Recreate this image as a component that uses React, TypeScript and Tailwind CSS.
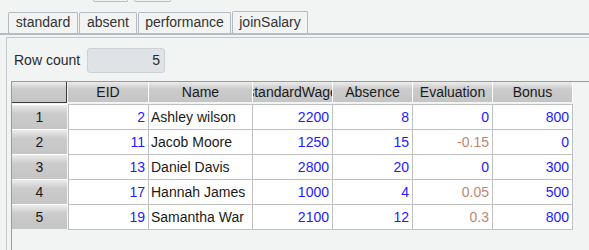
const tabs = [
  { label: "standard", w: "w-[70px]", active: false },
  { label: "absent", w: "w-[58px]", active: false },
  { label: "performance", w: "w-[93px]", active: false },
  { label: "joinSalary", w: "w-[76px]", active: true },
];

type Col = { label: string; w: string; align: "left" | "right"; first?: boolean };

const cols: Col[] = [
  { label: "EID", w: "w-[81px]", align: "right", first: true },
  { label: "Name", w: "w-[104px]", align: "left" },
  { label: "standardWage", w: "w-[80px]", align: "right" },
  { label: "Absence", w: "w-[80px]", align: "right" },
  { label: "Evaluation", w: "w-[80px]", align: "right" },
  { label: "Bonus", w: "w-[80px]", align: "right" },
];

const rows = [
  [2, "Ashley wilson", 2200, 8, 0, 800],
  [11, "Jacob Moore", 1250, 15, -0.15, 0],
  [13, "Daniel Davis", 2800, 20, 0, 300],
  [17, "Hannah James", 1000, 4, 0.05, 500],
  [19, "Samantha War", 2100, 12, 0.3, 800],
];

const grad = "bg-[linear-gradient(to_bottom,#ececec,#cbcbcb_35%,#c5c5c5)]";

function cellColor(ci: number, v: string | number) {
  if (ci === 1) return "text-[#1a1a1a]";
  if (ci === 4 && v !== 0) return "text-[#bf8571]";
  return "text-[#1c1cff]";
}

export default function App() {
  return (
    <div
      className="relative h-[250px] w-[589px] overflow-hidden bg-[#f2f3f3] text-[14px] text-[#1a1a1a]"
      style={{ fontFamily: '"Liberation Sans", Arial, sans-serif' }}
    >
      {/* bottoms of toolbar buttons cut off by the frame */}
      <div className="flex h-[2px]">
        <div className="ml-[93px] w-[35px] rounded-b-[2px] border-x border-b border-[#b9bec3]" />
        <div className="ml-[6px] w-[37px] rounded-b-[2px] border-x border-b border-[#b9bec3]" />
      </div>

      {/* tab strip */}
      <div className="mt-[9px] flex h-[24px] items-end gap-[1px] border-b-2 border-[#b4bbc1] pl-[8px]">
        {tabs.map((t) => (
          <div
            key={t.label}
            className={`${t.w} flex items-center justify-center rounded-t-[2px] border border-b-0 border-[#b4bbc1] bg-[#f2f3f3] pb-[1px] text-[#333] ${
              t.active ? "h-[22px]" : "h-[21px]"
            }`}
          >
            {t.label}
          </div>
        ))}
      </div>

      {/* panel */}
      <div className="ml-[6px] mt-[2px] border-l border-t border-[#c3c8cc] pt-[10px]">
        <div className="flex items-center">
          <span className="ml-[7px] text-[#2a2a2a]">Row count</span>
          <div className="ml-[7px] flex h-[25px] w-[78px] items-center justify-end rounded-[3px] border border-[#cdd1d5] bg-[#dfe2e6] pr-[4px] text-[#2a2a2a]">
            5
          </div>
        </div>

        {/* table scroll pane */}
        <div className="ml-[4px] mt-[8px] h-[200px] border-l border-t border-[#9a9a9a]">
          {/* header */}
          <div className="flex h-[22px] items-start">
            <div className={`h-[21px] w-[55px] border-b border-r border-[#3c3c3c] ${grad}`} />
            <div className="w-[1px]" />
            {cols.map((c) => (
              <div
                key={c.label}
                className={`${c.w} flex h-[20px] items-center justify-center overflow-hidden whitespace-nowrap border-r border-white ${grad}`}
              >
                <span className="shrink-0">{c.label}</span>
              </div>
            ))}
          </div>

          {/* body */}
          <div className="flex">
            <div className="flex w-[55px] flex-col">
              {rows.map((_, i) => (
                <div
                  key={i}
                  className={`flex h-[25px] items-center justify-center border-t border-white ${grad}`}
                >
                  {i + 1}
                </div>
              ))}
            </div>
            <div className="w-[1px]" />
            <div className="flex flex-col border-t border-[#c0c0c0] bg-white">
              {rows.map((r, ri) => (
                <div key={ri} className="flex h-[25px]">
                  {cols.map((c, ci) => (
                    <div
                      key={c.label}
                      className={`${c.w} ${c.first ? "border-l" : ""} flex items-center overflow-hidden whitespace-nowrap border-b border-r border-[#c0c0c0] ${
                        c.align === "right" ? "justify-end pr-[3px]" : "justify-start pl-[2px]"
                      } ${cellColor(ci, r[ci])}`}
                    >
                      {r[ci]}
                    </div>
                  ))}
                </div>
              ))}
            </div>
          </div>
        </div>
      </div>
    </div>
  );
}
